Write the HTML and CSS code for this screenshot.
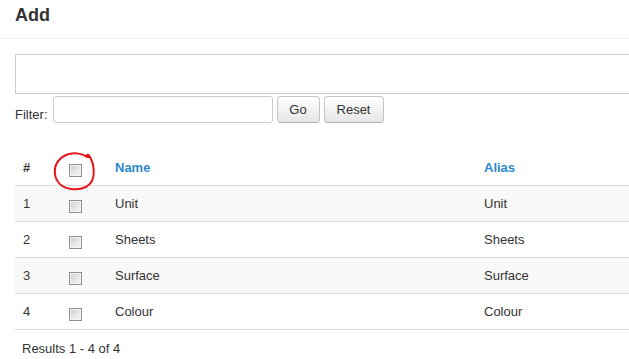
FILE: index.html
```html
<!DOCTYPE html>
<html lang="en">
<head>
    <meta charset="UTF-8">
    <title>Add</title>
    <link rel="stylesheet" href="styles.css">
</head>
<body>
    <div class="page-header">
        <h1>Add</h1>
    </div>

    <div class="content">
        <div class="message-box"></div>

        <form class="filter-bar">
            <label class="filter-label" for="filter">Filter:</label>
            <input class="filter-input" id="filter" type="text">
            <button class="btn btn-go" type="button">Go</button>
            <button class="btn btn-reset" type="button">Reset</button>
        </form>

        <div class="table-wrap">
            <table class="list-table">
                <thead>
                    <tr>
                        <th class="col-num">#</th>
                        <th class="col-check"><span class="checkbox"></span></th>
                        <th class="col-name"><a href="#">Name</a></th>
                        <th class="col-alias"><a href="#">Alias</a></th>
                    </tr>
                </thead>
                <tbody>
                    <tr>
                        <td>1</td>
                        <td><span class="checkbox"></span></td>
                        <td>Unit</td>
                        <td>Unit</td>
                    </tr>
                    <tr>
                        <td>2</td>
                        <td><span class="checkbox"></span></td>
                        <td>Sheets</td>
                        <td>Sheets</td>
                    </tr>
                    <tr>
                        <td>3</td>
                        <td><span class="checkbox"></span></td>
                        <td>Surface</td>
                        <td>Surface</td>
                    </tr>
                    <tr>
                        <td>4</td>
                        <td><span class="checkbox"></span></td>
                        <td>Colour</td>
                        <td>Colour</td>
                    </tr>
                </tbody>
            </table>

            <!-- hand drawn mark round the select-all box -->
            <svg class="scribble" width="50" height="46" viewBox="0 0 50 46">
                <path d="M36 8 C31 4 22 3 15 6 C7 10 3 17 4 25 C5 33 11 39 20 40 C29 41 37 39 41 32 C44 25 43 16 40 10 C39 7 37 5 36 6 C35 7 37 9 39 8"
                      fill="none" stroke="#e8141c" stroke-width="2" stroke-linecap="round" stroke-linejoin="round"/>
            </svg>
        </div>

        <div class="results">Results 1 - 4 of 4</div>
    </div>
</body>
</html>
```

FILE: styles.css
```css
body {
    margin: 0;
    padding: 0;
    background-color: #fff;
    color: #333;
    font-family: "Liberation Sans", Arial, sans-serif;
    font-size: 13px;
    overflow: hidden;
}
.page-header {
    height: 38px;
    border-bottom: 1px solid #eee;
    padding-left: 15px;
}
.page-header h1 {
    margin: 0;
    padding-top: 4px;
    font-size: 18px;
    line-height: 22px;
    font-weight: bold;
    color: #333;
}
.content {
    padding: 15px 0 0 15px;
}
.message-box {
    width: 640px;
    height: 38px;
    border: 1px solid #ccc;
}
.filter-bar {
    display: flex;
    align-items: center;
    margin: 2px 0 0;
    height: 27px;
}
.filter-label {
    margin-right: 5px;
    padding-top: 9px;
    color: #333;
}
.filter-input {
    box-sizing: border-box;
    width: 220px;
    height: 27px;
    margin: 0;
    padding: 2px 4px;
    border: 1px solid #ccc;
    border-radius: 3px;
    font-family: inherit;
    font-size: 13px;
}
.btn {
    box-sizing: border-box;
    height: 27px;
    margin: 0 0 0 4px;
    padding: 0;
    border: 1px solid #c5c5c5;
    border-bottom-color: #b3b3b3;
    border-radius: 4px;
    background: linear-gradient(#fff, #e6e6e6);
    color: #333;
    font-family: inherit;
    font-size: 13px;
}
.btn-go {
    width: 43px;
}
.btn-reset {
    width: 60px;
}
.table-wrap {
    position: relative;
    margin-top: 27px;
}
.list-table {
    width: 640px;
    border-collapse: collapse;
    table-layout: fixed;
}
.list-table th,
.list-table td {
    padding: 0 8px;
    height: 35px;
    text-align: left;
    vertical-align: middle;
}
.list-table th {
    font-weight: bold;
    border-bottom: 1px solid #ddd;
}
.list-table td {
    border-bottom: 1px solid #ddd;
}
.list-table th a {
    color: #2d8ac7;
    text-decoration: none;
}
.col-num {
    width: 30px;
}
.col-check {
    width: 30px;
}
.col-name {
    width: 353px;
}
.list-table tbody tr:nth-child(odd) td {
    background-color: #f9f9f9;
}
.checkbox {
    display: inline-block;
    box-sizing: border-box;
    width: 13px;
    height: 13px;
    margin-top: 6px;
    border: 1px solid #8f8f8f;
    box-shadow: inset 0 0 0 1px #f4f4f4;
    background: linear-gradient(135deg, #cfcfcf, #f7f7f7);
    vertical-align: middle;
}
.scribble {
    position: absolute;
    left: 36px;
    top: -1px;
}
.results {
    padding: 11px 0 0 7px;
    color: #333;
}
```
